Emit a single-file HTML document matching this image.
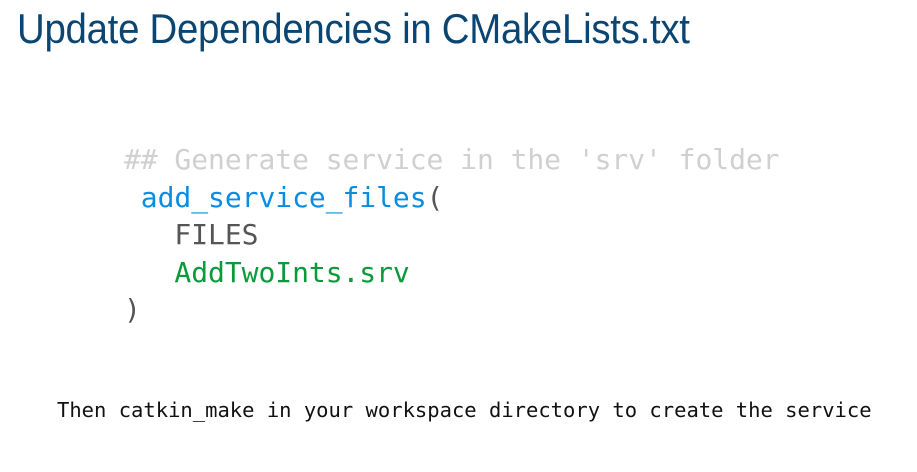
<!DOCTYPE html>
<html><head><style>
body{margin:0;width:917px;height:472px;background:#fff;position:relative;overflow:hidden}
.t{position:absolute;left:17px;top:5px;font:42px "Liberation Sans",sans-serif;color:#0b4673;white-space:nowrap;transform-origin:0 0;transform:scaleX(0.914);letter-spacing:-0.3px}
.c{position:absolute;left:124px;top:141px;font:28px "DejaVu Sans Mono","Liberation Mono",monospace;line-height:37.6px;white-space:pre;letter-spacing:-0.05px}
.b{position:absolute;left:57px;top:398px;font:20.5px "DejaVu Sans Mono","Liberation Mono",monospace;white-space:pre;color:#111}
</style></head><body>
<div class="t">Update Dependencies in CMakeLists.txt</div>
<div class="c"><span style="color:#d0d0d0">## Generate service in the 'srv' folder</span>
<span style="color:#0a8de0"> add_service_files</span><span style="color:#555">(</span>
<span style="color:#555">   FILES</span>
<span style="color:#0a9a3a">   AddTwoInts.srv</span>
<span style="color:#555">)</span></div>
<div class="b">Then catkin_make in your workspace directory to create the service</div>
</body></html>
